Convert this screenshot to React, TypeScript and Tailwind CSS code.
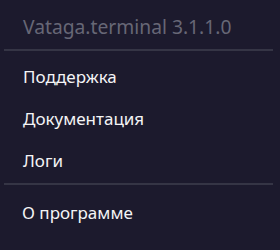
import React from 'react';

const items = ['Поддержка', 'Документация', 'Логи'];

export default function App() {
  return (
    <div
      className="w-[280px] h-[250px] bg-[#1c1a2d] text-white overflow-hidden"
      style={{ fontFamily: '"Noto Sans", "Open Sans", sans-serif' }}
    >
      {/* Header */}
      <div className="pl-[23px] pt-[15px] pb-[10px] text-[19.25px] leading-[24px] text-[#676776]">
        Vataga.terminal 3.1.1.0
      </div>
      <div className="ml-[4px] mr-[7px] h-[2px] bg-[#353545]" />

      {/* Menu items */}
      <div className="pt-[5px] pb-[1px]">
        {items.map((label) => (
          <div key={label} className="h-[42px] flex items-center pl-[23px] text-[17px] leading-[24px] text-[#f4f4f6]">
            {label}
          </div>
        ))}
      </div>
      <div className="ml-[4px] mr-[7px] h-[2px] bg-[#353545]" />

      <div className="pt-[7px]">
        <div className="h-[42px] flex items-center pl-[22px] text-[17px] leading-[24px] text-[#f4f4f6]">
          О программе
        </div>
      </div>
    </div>
  );
}
